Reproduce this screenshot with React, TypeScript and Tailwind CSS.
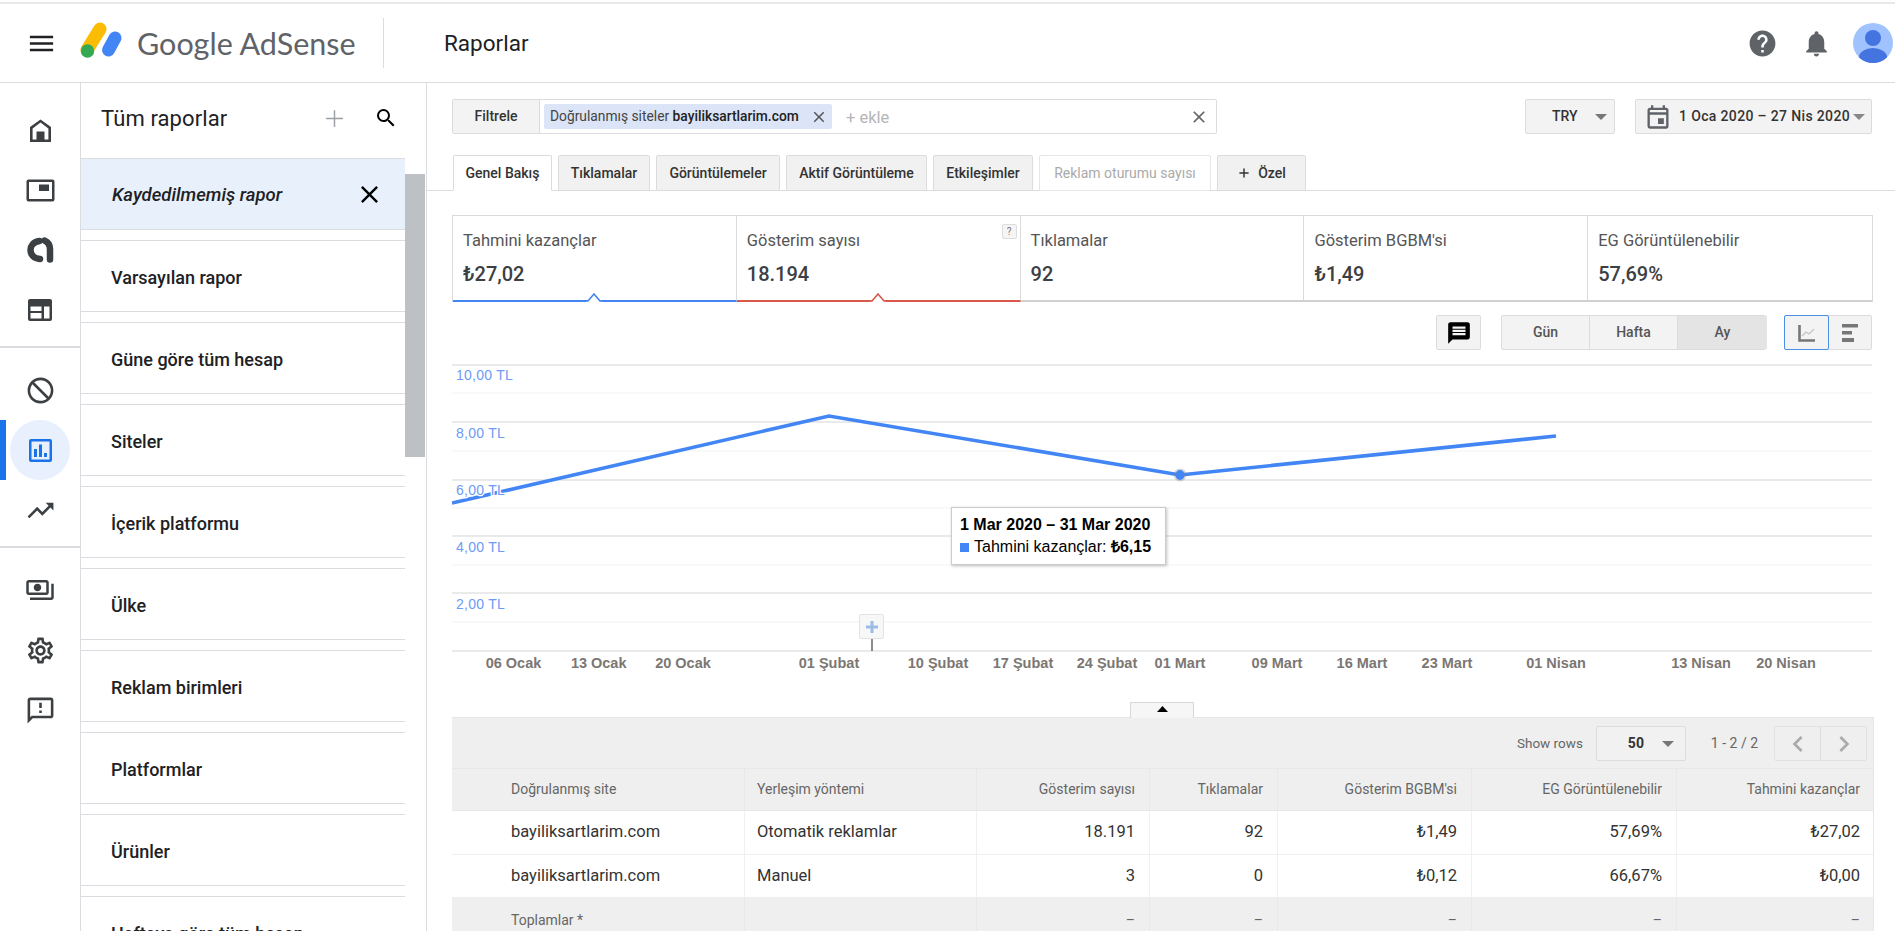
import React from "react";
import {
  MdMenu, MdHelp, MdNotifications, MdBlock, MdTrendingUp, MdOutlinePayments,
  MdOutlineSettings, MdOutlineFeedback, MdClose, MdSearch, MdOutlineEvent, MdMessage, MdChevronLeft, MdChevronRight,
} from "react-icons/md";
import { Plus } from "lucide-react";

const ink = "#3c4043";

function HomeIcon() {
  return (
    <svg width="21" height="23" viewBox="0 0 21 23">
      <path fillRule="evenodd" fill={ink} d="M10.5 0.5 L21 8 V23 H0 V8 Z M10.5 3.6 L2.6 9.4 V20.5 H18.4 V9.4 Z" />
      <rect x="6.5" y="12.5" width="8" height="8.5" fill={ink} />
    </svg>
  );
}
function AdIcon() {
  return (
    <svg width="29" height="23" viewBox="0 0 29 23">
      <path fillRule="evenodd" fill={ink} d="M2.5 0.5 H26.5 a2 2 0 0 1 2 2 V20.5 a2 2 0 0 1 -2 2 H2.5 a2 2 0 0 1 -2 -2 V2.5 a2 2 0 0 1 2 -2 Z M3 3 V20 H26 V3 Z" />
      <rect x="13" y="5.5" width="10" height="6.5" fill={ink} />
    </svg>
  );
}
function BrandAIcon() {
  return (
    <svg width="27" height="26" viewBox="0 0 27 26" fill="none" stroke={ink} strokeWidth="6.5" strokeLinecap="round">
      <path d="M12.5 4 C6 5 3.5 9 3.5 13 C3.5 18 7 21.5 13 22" />
      <path d="M17.5 3.5 C21 5 23 8 23 12 V22.5" />
    </svg>
  );
}
function LayoutIcon() {
  return (
    <svg width="24" height="22" viewBox="0 0 24 22">
      <path fillRule="evenodd" fill={ink} d="M2 0 H22 a2 2 0 0 1 2 2 V20 a2 2 0 0 1 -2 2 H2 a2 2 0 0 1 -2 -2 V2 a2 2 0 0 1 2 -2 Z M2.5 7.5 V12 H13.5 V7.5 Z M2.5 14 V19.5 H13.5 V14 Z M16 7.5 V19.5 H21.5 V7.5 Z" />
    </svg>
  );
}
function ReportIcon() {
  return (
    <svg width="23" height="23" viewBox="0 0 23 23" className="relative">
      <path fillRule="evenodd" fill="#1a73e8" d="M2 0 H21 a2 2 0 0 1 2 2 V21 a2 2 0 0 1 -2 2 H2 a2 2 0 0 1 -2 -2 V2 a2 2 0 0 1 2 -2 Z M2.5 2.5 V20.5 H20.5 V2.5 Z" />
      <rect x="5" y="10" width="3" height="8" fill="#1a73e8" />
      <rect x="10" y="5.5" width="3" height="12.5" fill="#1a73e8" />
      <rect x="15" y="14" width="3" height="4" fill="#1a73e8" />
    </svg>
  );
}

function Tri({ color = "#777" }: { color?: string }) {
  return (
    <svg width="12" height="6" viewBox="0 0 12 6"><path d="M0 0 H12 L6 6 Z" fill={color} /></svg>
  );
}

const items = ["Varsayılan rapor", "Güne göre tüm hesap", "Siteler", "İçerik platformu", "Ülke", "Reklam birimleri", "Platformlar", "Ürünler", "Haftaya göre tüm hesap"];

function Rail() {
  const cell = "h-[60px] flex items-center justify-center";
  return (
    <div className="w-[81px] shrink-0 border-r border-[#dadce0] flex flex-col items-stretch">
      <div className="pt-[17px] h-[265px] border-b-2 border-[#dadce0]">
        <div className={cell}><HomeIcon /></div>
        <div className={cell}><AdIcon /></div>
        <div className={cell}><BrandAIcon /></div>
        <div className={cell}><LayoutIcon /></div>
      </div>
      <div className="pt-[12px] h-[200px] border-b-2 border-[#dadce0]">
        <div className={cell}><MdBlock size={31} color={ink} className="-scale-x-100" /></div>
        <div className={`${cell} relative`}>
          <span className="absolute left-0 top-0 h-[60px] w-[6px] bg-[#1a73e8]" />
          <span className="absolute left-[10px] top-0 h-[60px] w-[60px] rounded-full bg-[#e8f0fe]" />
          <ReportIcon />
        </div>
        <div className={cell}><MdTrendingUp size={31} color={ink} /></div>
      </div>
      <div className="pt-[12px]">
        <div className={cell}><MdOutlinePayments size={30} color={ink} /></div>
        <div className={cell}><MdOutlineSettings size={31} color={ink} /></div>
        <div className={cell}><MdOutlineFeedback size={31} color={ink} /></div>
      </div>
    </div>
  );
}

function Sidebar() {
  return (
    <div className="w-[346px] shrink-0 border-r border-[#dadce0] flex flex-col overflow-hidden">
      <div className="h-[75px] shrink-0 flex items-center pl-[20px] pr-[28px] pb-[5px]">
        <div className="text-[22px] text-[#202124] flex-1 tracking-[0.1px]">Tüm raporlar</div>
        <Plus size={27} strokeWidth={1.3} color="#9aa0a6" className="mr-[26px]" />
        <MdSearch size={24} color="#000" />
      </div>
      <div className="flex flex-1 min-h-0">
        <div className="w-[324px] shrink-0">
          <div className="h-[72px] mb-[10px] bg-[#e8f0fb] border-y border-[#dadce0] flex items-center pl-[31px] pr-[21px]">
            <div className="flex-1 pt-[3px] italic font-medium text-[18.5px] text-[#202124]">Kaydedilmemiş rapor</div>
            <MdClose size={29} color="#000" />
          </div>
          {items.map((t) => (
            <div key={t} className="h-[72px] mb-[10px] border-y border-[#dadce0] flex items-center pl-[30px] pt-[2px] font-medium text-[18px] text-[#202124]">{t}</div>
          ))}
        </div>
        <div className="w-[21px] pl-0 pr-[1px] pt-[16px]">
          <div className="h-[283px] bg-[#bdc1c6]" />
        </div>
      </div>
    </div>
  );
}

function TabBtn({ children, w, active, disabled }: { children: React.ReactNode; w: string; active?: boolean; disabled?: boolean }) {
  return (
    <div className={`${w} h-[36px] -mb-px flex items-center justify-center rounded-t-[2px] border text-[14px] ${active ? "bg-white border-[#dcdcdc] border-b-white text-[#333] font-medium" : disabled ? "bg-white border-[#e6e6e6] text-[#aaa]" : "bg-[#f1f1f1] border-[#dcdcdc] text-[#333] font-medium"}`}>
      {children}
    </div>
  );
}

const metrics = [
  { l: "Tahmini kazançlar", v: "₺27,02", c: "#4285f4" },
  { l: "Gösterim sayısı", v: "18.194", c: "#d9584c", q: true },
  { l: "Tıklamalar", v: "92" },
  { l: "Gösterim BGBM'si", v: "₺1,49" },
  { l: "EG Görüntülenebilir", v: "57,69%" },
];

function Metrics() {
  return (
    <div className="mt-[24px] mr-[-1px] h-[87px] grid grid-cols-5 border-t border-l border-r border-[#dadada]">
      {metrics.map((m, i) => (
        <div key={m.l} className={`relative pl-[10px] pt-[15px] border-b-2 ${i < 4 ? "border-r border-r-[#dadada]" : ""}`} style={{ borderBottomColor: m.c || "#d0d0d0" }}>
          <div className="text-[16.5px] leading-[20px] text-[#555]">{m.l}</div>
          <div className="mt-[11px] text-[20px] leading-[24px] font-medium text-[#3c4043]">{m.v}</div>
          {m.c && (
            <svg className="absolute left-[133px] bottom-[-2px]" width="16" height="9" viewBox="0 0 16 9">
              <path d="M0 8 H2 L8 1 L14 8 H16 V9 H0 Z" fill="#fff" />
              <path d="M0 8 H2 L8 1 L14 8 H16" fill="none" stroke={m.c} strokeWidth="1.6" />
            </svg>
          )}
          {m.q && (
            <div className="absolute right-[3px] top-[8px] w-[15px] h-[15px] flex items-center justify-center rounded-[2px] border border-[#ddd] bg-[#f5f5f5] text-[10px] text-[#777]">?</div>
          )}
        </div>
      ))}
    </div>
  );
}

const xLabels: [number, string][] = [
  [513.5, "06 Ocak"], [598.7, "13 Ocak"], [683, "20 Ocak"], [829, "01 Şubat"], [938, "10 Şubat"], [1023, "17 Şubat"], [1107, "24 Şubat"],
  [1180, "01 Mart"], [1277, "09 Mart"], [1362, "16 Mart"], [1447, "23 Mart"], [1556, "01 Nisan"], [1701, "13 Nisan"], [1786, "20 Nisan"],
];
const majors = [365, 422, 480, 536, 593, 651];
const minors = [393, 451, 508, 565, 622];
const yLabels: [number, string][] = [[380, "10,00 TL"], [438, "8,00 TL"], [495, "6,00 TL"], [552, "4,00 TL"], [609, "2,00 TL"]];

function Chart() {
  return (
    <div className="relative mt-[10px] h-[320px] font-['Liberation_Sans',sans-serif]">
      <svg width="1420" height="320" viewBox="452 360 1420 320" className="block">
        {majors.map((y) => <line key={y} x1="452" x2="1872" y1={y} y2={y} stroke="#e3e3e3" strokeWidth="1.5" />)}
        {minors.map((y) => <line key={y} x1="452" x2="1872" y1={y} y2={y} stroke="#f3f3f3" strokeWidth="1.2" />)}
        <polyline points="452,503 829,416 1180,475 1556,436" fill="none" stroke="#4285f4" strokeWidth="3.6" />
        <circle cx="1180" cy="475" r="6.5" fill="#888" opacity="0.35" />
        <ellipse cx="1180" cy="475" rx="4.5" ry="5" fill="#4285f4" />
        {yLabels.map(([y, t]) => (
          <text key={t} x="456" y={y} fontSize="14" letterSpacing="0.25" fill="#6d9bf5" stroke="#fff" strokeWidth="2.5" className="[paint-order:stroke]">{t}</text>
        ))}
        {xLabels.map(([x, t]) => (
          <text key={t} x={x} y="668" fontSize="14.5" fontWeight="700" textAnchor="middle" fill="#7c7773">{t}</text>
        ))}
        <line x1="872" x2="872" y1="638" y2="651" stroke="#666" strokeWidth="1.5" />
      </svg>
      <div className="absolute left-[407px] top-[254px] w-[25px] h-[25px] rounded-[2px] border border-[#e3e3e3] bg-[#f7f7f7] flex items-center justify-center">
        <svg width="12" height="12" viewBox="0 0 12 12"><path d="M4.5 0 H7.5 V4.5 H12 V7.5 H7.5 V12 H4.5 V7.5 H0 V4.5 H4.5 Z" fill="#9cbce8" /></svg>
      </div>
      <div className="absolute left-[499px] top-[147px] w-[215px] h-[58px] bg-white border border-[#ccc] shadow-[1px_1px_3px_rgba(0,0,0,0.25)] pl-[8px] pt-[6px] text-[16px] text-black">
        <div className="font-bold leading-[22px] whitespace-nowrap">1 Mar 2020 – 31 Mar 2020</div>
        <div className="flex items-center leading-[22px] whitespace-nowrap">
          <span className="w-[9px] h-[9px] bg-[#4285f4] mr-[5px]" />
          <span>Tahmini kazançlar:&nbsp;</span><b>₺6,15</b>
        </div>
      </div>
    </div>
  );
}

const rows = [
  ["bayiliksartlarim.com", "Otomatik reklamlar", "18.191", "92", "₺1,49", "57,69%", "₺27,02"],
  ["bayiliksartlarim.com", "Manuel", "3", "0", "₺0,12", "66,67%", "₺0,00"],
];
const head = ["Doğrulanmış site", "Yerleşim yöntemi", "Gösterim sayısı", "Tıklamalar", "Gösterim BGBM'si", "EG Görüntülenebilir", "Tahmini kazançlar"];
const total = ["Toplamlar *", "", "–", "–", "–", "–", "–"];
const colPad = (i: number) => (i === 0 ? "pl-[59px]" : i === 1 ? "pl-[12px]" : "justify-end pr-[14px]");
const gridCols = "grid grid-cols-[293px_232px_173px_128px_194px_205px_197px]";

function Table() {
  return (
    <div className="mr-[-2px]">
      <div className="flex justify-end h-[15px]">
        <div className="w-[64px] h-[16px] mr-[680px] bg-[#f6f6f6] border-x border-t border-[#d8d8d8] flex justify-center pt-[3px] z-10">
          <svg width="11" height="6" viewBox="0 0 11 6"><path d="M0 6 L5.5 0 L11 6 Z" fill="#000" /></svg>
        </div>
      </div>
      <div className="bg-[#efefef] border-t border-r border-[#e6e6e6]">
        <div className="h-[50px] flex items-center justify-end pt-[1px] pr-[6px] text-[14px] text-[#666]">
          <span className="text-[13.5px]">Show rows</span>
          <div className="ml-[13px] w-[90px] h-[35px] rounded-[2px] border border-[#dcdcdc] bg-[#f1f1f1] flex items-center pl-[31px] pr-[11px]">
            <span className="flex-1 font-bold text-[#333]">50</span><Tri />
          </div>
          <span className="ml-[25px]">1 - 2 / 2</span>
          <div className="ml-[16px] flex h-[35px] rounded-[2px] border border-[#e2e2e2]">
            <div className="w-[46px] border-r border-[#dcdcdc] flex items-center justify-center"><MdChevronLeft size={32} color="#aaa" /></div>
            <div className="w-[45px] flex items-center justify-center"><MdChevronRight size={32} color="#aaa" /></div>
          </div>
        </div>
        <div className={`${gridCols} h-[43px] border-y border-[#e8e8e8]`}>
          {head.map((h, i) => (
            <div key={h} className={`flex items-center text-[14px] text-[#666] border-r border-[#e8e8e8] last:border-r-0 ${colPad(i)}`}>{h}</div>
          ))}
        </div>
        {rows.map((r, k) => (
          <div key={k} className={`${gridCols} ${k === 0 ? "h-[44px]" : "h-[43px]"} bg-white border-b border-[#efefef]`}>
            {r.map((c, i) => (
              <div key={i} className={`flex items-center text-[16.5px] text-[#333] border-r border-[#f0f0f0] last:border-r-0 ${colPad(i)}`}>{c}</div>
            ))}
          </div>
        ))}
        <div className={`${gridCols} h-[44px]`}>
          {total.map((c, i) => (
            <div key={i} className={`flex items-center text-[14px] text-[#666] border-r border-[#e8e8e8] last:border-r-0 ${colPad(i)}`}>{c}</div>
          ))}
        </div>
      </div>
    </div>
  );
}

export default function App() {
  const btn = "border border-[#dcdcdc] bg-[#f3f3f3] rounded-[2px]";
  return (
    <div className="h-[931px] w-[1895px] overflow-hidden bg-white flex flex-col font-['Roboto',sans-serif]">
      <div className="h-[81px] shrink-0 border-t-2 mt-[2px] border-t-[#e8e8e8] border-b border-b-[#dadce0] flex items-center relative">
        <MdMenu size={31} color="#202124" className="ml-[26px]" />
        <svg width="50" height="48" viewBox="0 0 50 48" className="ml-[22px]">
          <line x1="21" y1="10" x2="8" y2="31" stroke="#fbbc04" strokeWidth="13" strokeLinecap="round" />
          <line x1="36" y1="19" x2="29.5" y2="31" stroke="#4285f4" strokeWidth="13" strokeLinecap="round" />
          <circle cx="8.5" cy="32" r="6.7" fill="#34a853" />
        </svg>
        <div className="ml-[8px] pt-[2px] text-[30.5px] text-[#5f6368] font-['Lato',sans-serif] whitespace-nowrap w-[246px]">Google AdSense</div>
        <div className="h-[50px] w-px bg-[#dadce0]" />
        <div className="ml-[60px] pt-[2px] text-[22.5px] text-[#202124] flex-1">Raporlar</div>
        <MdHelp size={31} color="#5f6368" className="mr-[23px]" />
        <MdNotifications size={31} color="#5f6368" className="mr-[21px]" />
        <div className="w-[40px] h-[40px] rounded-full bg-[#a0c3ff] overflow-hidden mr-[2px]">
          <svg width="40" height="40" viewBox="0 0 40 40">
            <circle cx="20" cy="15" r="8" fill="#4374e0" />
            <ellipse cx="20" cy="34" rx="14" ry="9" fill="#4374e0" />
          </svg>
        </div>
      </div>
      <div className="flex flex-1 min-h-0">
        <Rail />
        <Sidebar />
        <div className="flex-1 min-w-0 flex flex-col pt-[16px]">
          <div className="pl-[25px] pr-[23px] flex">
            <div className="w-[765px] h-[35px] flex items-stretch rounded-[2px] border border-[#dcdcdc]">
              <div className="w-[87px] bg-[#f3f3f3] border-r border-[#dcdcdc] flex items-center justify-center text-[14px] font-medium text-[#333]">Filtrele</div>
              <div className="ml-[4px] my-[4px] w-[288px] rounded-[2px] bg-[#dbe5f7] flex items-center pl-[6px] text-[13.8px] text-[#444] whitespace-nowrap">
                <span>Doğrulanmış siteler&nbsp;</span><span className="text-[#222] font-medium">bayiliksartlarim.com</span>
                <MdClose size={18} color="#555" className="ml-[11px]" />
              </div>
              <div className="ml-[14px] pt-[4px] flex-1 flex items-center text-[16.5px] text-[#b5b5b5]">+ ekle</div>
              <MdClose size={20} color="#666" className="self-center mr-[7px]" />
            </div>
            <div className="flex-1" />
            <div className={`${btn} w-[90px] h-[35px] flex items-center pl-[26px] pr-[7px] text-[14px] font-medium text-[#333]`}>
              <span className="flex-1">TRY</span><Tri />
            </div>
            <div className={`${btn} ml-[20px] w-[237px] h-[35px] flex items-center pl-[8px] text-[14px] font-medium text-[#333] whitespace-nowrap`}>
              <MdOutlineEvent size={28} color="#5f6368" />
              <span className="ml-[7px] flex-1 tracking-[0.35px]">1 Oca 2020 – 27 Nis 2020</span>
              <Tri color="#888" /><span className="w-[6px]" />
            </div>
          </div>
          <div className="mt-[21px] h-[36px] border-b border-[#dcdcdc] pl-[26px] flex gap-[6px]">
            <TabBtn w="w-[99px]" active>Genel Bakış</TabBtn>
            <TabBtn w="w-[92px]">Tıklamalar</TabBtn>
            <TabBtn w="w-[124px]">Görüntülemeler</TabBtn>
            <TabBtn w="w-[141px]">Aktif Görüntüleme</TabBtn>
            <TabBtn w="w-[100px]">Etkileşimler</TabBtn>
            <TabBtn w="w-[172px]" disabled>Reklam oturumu sayısı</TabBtn>
            <TabBtn w="w-[89px]"><Plus size={14} strokeWidth={2.5} className="mr-[7px]" />Özel</TabBtn>
          </div>
          <div className="pl-[25px] pr-[23px]">
            <Metrics />
            <div className="mt-[13px] h-[35px] flex justify-end">
              <div className={`${btn} w-[45px] flex items-center justify-center`}><MdMessage size={26} color="#000" /></div>
              <div className={`${btn} ml-[20px] w-[265px] grid grid-cols-[88px_88px_89px] text-[14px] font-medium text-[#555]`}>
                <div className="flex items-center justify-center border-r border-[#dcdcdc]">Gün</div>
                <div className="flex items-center justify-center border-r border-[#dcdcdc]">Hafta</div>
                <div className="flex items-center justify-center bg-[#e4e4e4]">Ay</div>
              </div>
              <div className={`${btn} ml-[18px] w-[88px] flex relative`}>
                <div className="w-[45px] -m-px h-[35px] border border-[#4a90e2] rounded-[2px] flex items-center justify-center">
                  <svg width="18" height="18" viewBox="0 0 18 18" fill="none">
                    <path d="M1.5 1 V16.5 H17" stroke="#777" strokeWidth="2.6" />
                    <path d="M4 12 L8 8 L11 10 L16 5" stroke="#c4c4c4" strokeWidth="1.3" />
                  </svg>
                </div>
                <div className="flex-1 flex items-center justify-center">
                  <svg width="16" height="18" viewBox="0 0 16 18"><path d="M0 0 H16 V3.5 H0 Z M0 7 H10 V10.5 H0 Z M0 14 H12 V18 H0 Z" fill="#777" /></svg>
                </div>
              </div>
            </div>
            <Chart />
            <div className="mt-[22px]"><Table /></div>
          </div>
        </div>
      </div>
    </div>
  );
}
